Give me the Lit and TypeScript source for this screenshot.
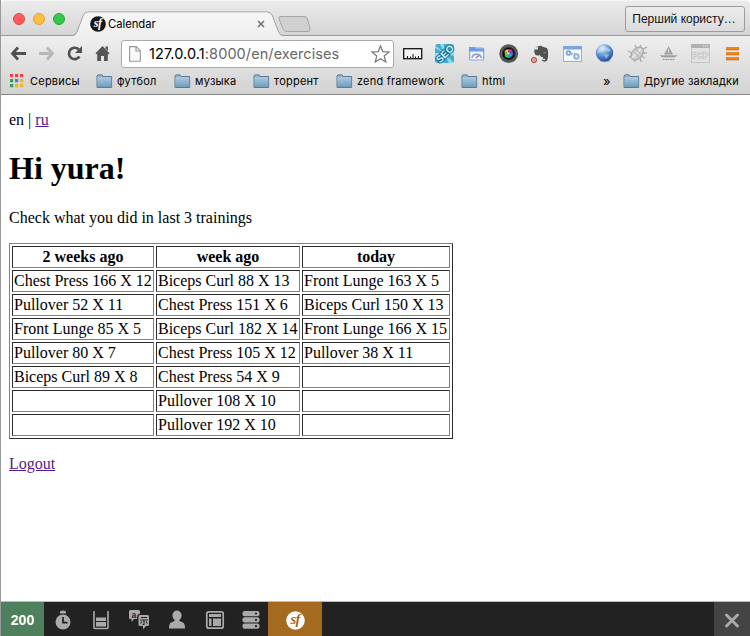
import { LitElement, html, css, svg } from "lit";
import { customElement } from "lit/decorators.js";

const folder = html`<svg class="folder" width="17" height="15" viewBox="0 0 17 15">
  <defs><linearGradient id="f" x1="0" y1="0" x2="0" y2="1"><stop offset="0" stop-color="#a4c3da"/><stop offset="1" stop-color="#6f9cbd"/></linearGradient></defs>
  <path d="M1 13.5V1.8L2 .9H6.2L7 2.5H15.6V13.5Z" fill="#91b4ce" stroke="#587a94"/>
  <path d="M1.5 4.5H15.2V13H1.5Z" fill="url(#f)"/><path d="M1.5 4H15" stroke="#bdd4e4"/>
</svg>`;

const logo = (bg: string, fg: string, size: number) => html`<svg width=${size} height=${size} viewBox="0 0 20 20">
  <circle cx="10" cy="10" r="9.8" fill=${bg}/>
  <text x="9.6" y="13.8" text-anchor="middle" font-family="Liberation Serif, serif" font-style="italic" font-weight="bold" font-size="15.5" letter-spacing="-.8" fill=${fg}>sf</text>
</svg>`;

const extensions = [
  svg`<rect x=".7" y="4.700" width="18" height="10" fill="#f4f4f4" stroke="#111" stroke-width="1.3"/><path d="M4.500 14V12M7.500 14V12.500M10 14V10M12.500 14V12.500M15.500 14V12" stroke="#111"/>`,
  svg`<rect width="19" height="19" rx="2.500" fill="#45acd0"/><path d="M9 9L0 4V1ZM9 9L5 0H9ZM9 9L19 7V12ZM9 9L19 19H14ZM9 9L8 19H4ZM9 9L0 13V9Z" fill="#8fd7ea"/><text x="0" y="0" text-anchor="middle" transform="translate(12.300 12.300) rotate(-45)" font-family="Liberation Sans, sans-serif" font-weight="bold" font-size="9.800" fill="#cdf3fc" stroke="#126f99" stroke-width="2" paint-order="stroke">SEO</text>`,
  svg`<rect x="2.600" y="4" width="14" height="12" rx="1" fill="#edf4fd" stroke="#86abe0" stroke-width="1.2"/><path d="M2 3H8L9 4.500H17V7.500H2Z" fill="#6d9be5"/><path d="M5 14A4.700 4.300 0 0 1 14.300 14" fill="none" stroke="#799fd3" stroke-width="1.500"/><path d="M9 14L12 11.500" stroke="#d56b63" stroke-width="1.500"/>`,
  svg`<circle cx="9.700" cy="9.700" r="9.400" fill="#515151"/><circle cx="9.700" cy="9.700" r="7.500" fill="#3b3b3b" stroke="#777" stroke-width=".6"/><circle cx="9.700" cy="9.700" r="5.900" fill="#090909"/><path d="M9.700 9.700L5.500 7L8.500 5Z" fill="#f3df3e"/><path d="M9.700 9.700L8.500 5L13 5.500Z" fill="#d63e85"/><path d="M9.700 9.700L13 5.500L14.500 10.500Z" fill="#7053d9"/><path d="M9.700 9.700L14.500 10.500L10.500 14.300Z" fill="#269de1"/><path d="M9.700 9.700L10.500 14.300L6 13Z" fill="#18c8a0"/><path d="M9.700 9.700L6 13L5.500 7Z" fill="#71c83d"/><circle cx="9.500" cy="9.500" r="1.100" fill="#eee"/>`,
  svg`<path d="M3 5L7 2V5.500H3.300V8Q4 12 7 11.500L9 11Q9 13 12 13.300Q13 16 10.500 15.500Q11 18 14 17.600Q17 17.300 17 12Q17.500 5 15.500 3.700L12 3Q10.500 1 8 2Z" fill="#50534f"/><path d="M12.600 9Q13.500 7.500 14.500 9Z" fill="#ddd"/><path d="M11.500 15.500H14" stroke="#e8e8e8" stroke-width="1.2"/><circle cx="3" cy="16" r="2.600" fill="#e8a190" stroke="#a34e42"/>`,
  svg`<rect x=".5" y="2.500" width="18" height="15" fill="#f4f9fe" stroke="#8ab1e2"/><path d="M0 2H19V5.500H0Z" fill="#78a6de"/><circle cx="5.500" cy="9" r="1.900" fill="none" stroke="#7ba7d4" stroke-width="1.800"/><circle cx="13.500" cy="12.500" r="2.200" fill="none" stroke="#8db5da" stroke-width="2"/><path d="M8 11L9.500 9M11 9L12 10" stroke="#8db5da" stroke-width="1.500"/>`,
  svg`<defs><radialGradient id="g" cx=".38" cy=".25" r=".8"><stop offset="0" stop-color="#f0faff"/><stop offset=".35" stop-color="#80afdf"/><stop offset=".75" stop-color="#3c6fb5"/><stop offset="1" stop-color="#1d4285"/></radialGradient></defs><ellipse cx="10" cy="16.500" rx="5.500" ry="1.800" fill="#a3b7ce"/><circle cx="9.500" cy="8.800" r="8.700" fill="url(#g)"/><path d="M3 5Q7 1 9 5L6 8L2 9ZM11 3L16 6L13 8L10 6ZM9 10L14 11L11 15Z" fill="#c8e0f4" opacity=".55"/>`,
  svg`<g fill="none" stroke="#a9a9a9" stroke-width="1.3"><path d="M1 7L5 9M2 13L6 12M7 18L9 15M8 1L10 5M14 1L12 5M16 5L20 3M16 9H20M14 12L18 14M13 14L14 18"/><ellipse cx="10.200" cy="9.500" rx="5" ry="7.300" transform="rotate(43 10.200 9.500)" fill="#d0d0d0"/><path d="M5 14L14 5" stroke="#eee"/><path d="M7 8L12 13M9 6L14 10" stroke="#bbb"/></g>`,
  svg`<path d="M9.500 2L10.500 4L14 10.500H5L8.700 4Z" fill="#a1a1a1"/><path d="M9.500 5V9" stroke="#ddd"/><path d="M0 11H19L15 13.500H4Z" fill="#b2b2b2"/><path d="M2 12.500H17M3.500 15.500H15.500" stroke="#999" stroke-width="1.2" stroke-dasharray="2 .5"/>`,
  svg`<rect x=".5" y=".5" width="18" height="18" fill="#e2e2e2" stroke="#c6c6c6"/><path d="M0 0H19V4H0Z" fill="#b0b0b0"/><path d="M12 2H17" stroke="#eee" stroke-dasharray="1 1"/><text x="9.500" y="14.300" text-anchor="middle" font-family="Liberation Sans, sans-serif" font-weight="bold" font-size="7.800" fill="#e6e6e6" stroke="#b4b4b4" stroke-width="1" paint-order="stroke">PHP</text>`,
  svg`<path d="M3 4.700H16M3 9.700H16M3 14.700H16" stroke="#c46a14" stroke-width="3"/><path d="M3.400 4.400H15.600M3.400 9.400H15.600M3.400 14.400H15.600" stroke="#f58616" stroke-width="2"/>`,
];

const bookmarks: [string, string][] = [
  ["футбол", "b1"], ["музыка", "b2"], ["торрент", "b3"], ["zend framework", "b4"], ["html", "b5"],
];

const trainings = [
  ["Chest Press 166 X 12", "Biceps Curl 88 X 13", "Front Lunge 163 X 5"],
  ["Pullover 52 X 11", "Chest Press 151 X 6", "Biceps Curl 150 X 13"],
  ["Front Lunge 85 X 5", "Biceps Curl 182 X 14", "Front Lunge 166 X 15"],
  ["Pullover 80 X 7", "Chest Press 105 X 12", "Pullover 38 X 11"],
  ["Biceps Curl 89 X 8", "Chest Press 54 X 9", ""],
  ["", "Pullover 108 X 10", ""],
  ["", "Pullover 192 X 10", ""],
];

@customElement("browser-chrome")
class BrowserChrome extends LitElement {
  static styles = css`
    :host { display: block; height: 95px; font-family: Inter, "Noto Sans", sans-serif; color: #111; }
    * { box-sizing: border-box; }
    svg { display: block; flex: none; overflow: visible; }
    .strip { height: 36px; display: flex; background: linear-gradient(#ebebeb, #d5d5d5); border-top: 1px solid #f5f5f5; position: relative; border-radius: 5px 5px 0 0; }
    .shape { position: absolute; left: 0; top: -1px; }
    .lights { display: flex; gap: 8px; padding: 12px 0 0 13px; width: 90px; flex: none; position: relative; }
    .light { width: 12px; height: 12px; border-radius: 50%; border: 1px solid #e2453f; background: #fc5d5b; }
    .light.y { background: #fdbd40; border-color: #dea035; }
    .light.g { background: #34c749; border-color: #25a733; }
    .tab { position: relative; display: flex; align-items: center; width: 175px; height: 23px; margin-top: 11px; font: 11.3px Inter, sans-serif; gap: 2px; }
    .tab .t { flex: 1; letter-spacing: -.05px; color: #000; }
    .user { position: relative; margin: 5px 5px 0 auto; width: 120px; height: 26px; padding-right: 2px; border: 1px solid #9c9c9c; border-radius: 3px; background: linear-gradient(#ececec, #dcdcdc); font: 12px/25px "Liberation Sans", sans-serif; text-align: center; white-space: nowrap; }
    .bars { height: 59px; background: linear-gradient(#efefef, #d2d2d2); border-bottom: 1px solid #888; }
    .nav { height: 35px; display: flex; align-items: center; padding-left: 10px; }
    .buttons { width: 111px; }
    .omni { width: 273px; height: 28px; border: 1px solid #aaa; border-radius: 3px; background: #fff; display: flex; align-items: center; padding: 0 3px 0 7px; }
    .url { margin-left: 8px; flex: 1; font-size: 14.5px; white-space: nowrap; color: #666; letter-spacing: .08px; }
    .url b { font-weight: 400; color: #000; }
    .exts { display: flex; gap: 12px; margin-left: 9px; }
    .marks { height: 22px; margin-top: -1px; display: flex; align-items: center; font-size: 11px; letter-spacing: .22px; padding-left: 10px; white-space: nowrap; color: #000; }
    .mark { display: flex; align-items: center; gap: 4px; }
    .apps { width: 86px; gap: 6px; }
    .b1 { width: 78px; } .b2 { width: 79px; } .b3 { width: 83px; } .b4 { width: 125px; letter-spacing: .2px; } .b5 { width: 142px; }
    .more { width: 20px; font-size: 13px; }
    .other { letter-spacing: .18px; }
  `;
  render() {
    return html`
      <div class="strip">
        <svg class="shape" width="750" height="36" viewBox="0 0 750 36">
          <defs><linearGradient id="t" x1="0" y1="0" x2="0" y2="1"><stop offset="0" stop-color="#f7f7f7"/><stop offset="1" stop-color="#efefef"/></linearGradient></defs>
          <path d="M0 35.5H72Q75.500 35.500 77 32L83.500 15Q85 12 88 12H267Q270.500 12 272 15L278.500 32Q280 35.500 283 35.500H750" fill="none" stroke="#999"/>
          <path d="M75 36L77.500 32L84 15Q85.500 12.500 88 12.500H267Q270 12.500 271.500 15L278 32L281 36Z" fill="url(#t)"/>
          <path d="M281 16.500H304Q306.500 16.500 307.500 19L310 28Q310.500 31.500 308 31.500H287Q284 31.500 283 29L279 19Q278 16.500 281 16.500Z" fill="#d0d0d0" stroke="#a5a5a5"/>
        </svg>
        <div class="lights"><i class="light"></i><i class="light y"></i><i class="light g"></i></div>
        <div class="tab">${logo("#161616", "#fff", 16)}<span class="t">Calendar</span>
          <svg width="8" height="8" viewBox="0 0 8 8"><path d="M1 1L7 7M7 1L1 7" stroke="#707070" stroke-width="1.5"/></svg></div>
        <div class="user">Перший користу…</div>
      </div>
      <div class="bars">
        <div class="nav">
          <svg class="buttons" width="111" height="20" viewBox="10 44 111 20">
            <path d="M18 47.500L12.500 53.500L18 59.500M13 53.500H26" fill="none" stroke="#505050" stroke-width="2.800"/>
            <path d="M47 47.500L52.500 53.500L47 59.500M52 53.500H39" fill="none" stroke="#b7b7b7" stroke-width="2.800"/>
            <path d="M78.800 49.500A5.700 5.700 0 1 0 79.500 56.500" fill="none" stroke="#505050" stroke-width="2.700"/><path d="M82 46V53H75Z" fill="#505050"/>
            <path d="M102.500 46L109.500 53.300L108.500 54.300H107.800V61H104V56H101V61H97.200V54.300H96.500L95.500 53.300Z" fill="#565656"/><path d="M105.500 46.500H108V51L105.500 48.500Z" fill="#565656"/>
          </svg>
          <div class="omni">
            <svg width="12" height="16" viewBox="0 0 12 16"><path d="M.6 .6H7.200L11.300 4.700V15.200H.6Z M7 .6V5H11.300" fill="#f8f8f8" stroke="#969696" stroke-width="1.100"/></svg>
            <span class="url"><b>127.0.0.1</b>:8000/en/exercises</span>
            <svg width="19" height="18" viewBox="0 0 19 18"><path d="M9.500 1L11.800 6.600L18 7L13.200 11L14.800 17L9.500 13.700L4.200 17L5.800 11L1 7L7.200 6.600Z" fill="#fff" stroke="#777" stroke-width="1.200"/></svg>
          </div>
          <div class="exts">${extensions.map((e) => html`<svg width="20" height="20" viewBox="0 0 20 20">${e}</svg>`)}</div>
        </div>
        <div class="marks">
          <div class="mark apps"><svg width="14" height="14" viewBox="0 0 14 14">
            ${["#ee4540", "#ee4540", "#ee4540", "#35a055", "#3e82dd", "#efb32b", "#35a055", "#efb32b", "#efb32b"].map((c, i) => svg`<rect x=${(i % 3) * 5} y=${Math.floor(i / 3) * 5} width="3.200" height="3.200" fill=${c}/>`)}
          </svg>Сервисы</div>
          ${bookmarks.map(([t, c]) => html`<div class="mark ${c}">${folder}${t}</div>`)}
          <span class="more">»</span>
          <div class="mark other">${folder}Другие закладки</div>
        </div>
      </div>`;
  }
}

@customElement("debug-bar")
class DebugBar extends LitElement {
  static styles = css`
    :host { display: flex; box-sizing: border-box; height: 35px; background: #222; border-top: 1px solid #bbb; align-items: stretch; }
    svg { display: block; }
    .status { width: 43px; background: #4f805d; color: #fff; font: bold 14px/36px "Liberation Sans", sans-serif; text-align: center; }
    .brand { width: 54px; background: #a46a1f; display: flex; align-items: center; justify-content: center; padding-top: 2px; box-sizing: border-box; }
    .close { margin-left: auto; width: 36px; background: #444; }
  `;
  render() {
    return html`
      <div class="status">200</div>
      <svg width="224" height="34" viewBox="44 602 224 34" fill="#aaa">
        <circle cx="63" cy="622" r="7.500"/><path d="M60 611.500Q63 609.500 66 611.500V613.500H60Z"/><path d="M63 617V622.700H67.500" fill="none" stroke="#222" stroke-width="1.700"/>
        <path d="M94 611V627.800Q94 628.500 95 628.500H107Q108 628.500 108 627.800V611" fill="none" stroke="#aaa" stroke-width="1.600"/><path d="M96 617.500H106V621H96ZM96 622H106V626.500H96Z"/>
        <path d="M130.500 610H138.500Q140 610 140 611.500V614H139.500Q137 614 137 617V619H134L131.500 622V619H130.500Q129 619 129 617.500V611.500Q129 610 130.500 610Z"/>
        <path d="M140 615H147.500Q149 615 149 616.500V624.500Q149 626 147.500 626H146L143 629.500V626H140Q138.500 626 138.500 624.500V616.500Q138.500 615 140 615Z"/>
        <text x="131.500" y="617.500" font-family="Liberation Sans, sans-serif" font-weight="bold" font-size="8.500" fill="#222">a</text>
        <path d="M141 617.500H147M140 620H148M144 620V624.500H142.500M142 621.500L140.500 623.500M146 621.500L147.500 623.500" fill="none" stroke="#222" stroke-width="1.100"/>
        <ellipse cx="177" cy="615.500" rx="4.600" ry="5"/><path d="M174.500 618H179.500V621L183 622.500Q185 623.500 185 628.500H169Q169 623.500 171 622.500L174.500 621Z"/>
        <rect x="206.800" y="611.800" width="16.400" height="16.400" rx="2" fill="none" stroke="#aaa" stroke-width="1.700"/><path d="M209 614H221V617H209ZM209 618.500H211.500V626H209ZM213 618.500H221V626H213Z"/>
        <rect x="242.500" y="611" width="17" height="5.200" rx="2"/><rect x="242.500" y="617.300" width="17" height="5.200" rx="2"/><rect x="242.500" y="623.600" width="17" height="5.200" rx="2"/>
        <g fill="#222"><circle cx="256" cy="613.500" r="1.100"/><circle cx="256" cy="619.900" r="1.100"/><circle cx="256" cy="626.200" r="1.100"/></g>
      </svg>
      <div class="brand">${logo("#fff", "#a46a1f", 19)}</div>
      <div class="close"><svg width="36" height="34" viewBox="0 0 36 34"><path d="M12.500 13L23.500 24M23.500 13L12.500 24" stroke="#aaa" stroke-width="3" stroke-linecap="round"/></svg></div>`;
  }
}

@customElement("app-root")
class AppRoot extends LitElement {
  static styles = css`
    :host { display: flex; flex-direction: column; width: 750px; height: 636px; box-sizing: border-box; border-left: 1px solid #999; background: #fff; overflow: hidden; }
    main { flex: 1; padding: 16px 8px 0; font: 16px/18px "Liberation Serif", serif; color: #000; }
    browser-chrome { margin-left: -1px; }
    a { color: #551a8b; text-decoration: underline; }
    p { margin: 0; }
    h1 { font-size: 32px; line-height: 37px; margin: 21px 0 22px; }
    table { margin: 16px 0; width: 444px; table-layout: fixed; border: 1px outset #808080; border-collapse: separate; border-spacing: 2px; }
    th, td { border: 1px inset #808080; padding: 1px; height: 18px; box-sizing: content-box; white-space: nowrap; line-height: 18px; }
    .c1 { width: 138px; } .c2 { width: 140px; } .c3 { width: 144px; }
  `;
  render() {
    return html`
      <browser-chrome></browser-chrome>
      <main>
        <p>en | <a>ru</a></p>
        <h1>Hi yura!</h1>
        <p>Check what you did in last 3 trainings</p>
        <table>
          <thead><tr><th class="c1">2 weeks ago</th><th class="c2">week ago</th><th class="c3">today</th></tr></thead>
          <tbody>${trainings.map((r) => html`<tr>${r.map((c) => html`<td>${c}</td>`)}</tr>`)}</tbody>
        </table>
        <a>Logout</a>
      </main>
      <debug-bar></debug-bar>`;
  }
}
